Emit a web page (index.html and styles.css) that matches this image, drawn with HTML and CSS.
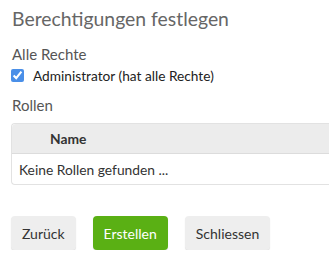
FILE: index.html
```html
<!DOCTYPE html>
<html lang="de">
<head>
  <meta charset="UTF-8">
  <title>Berechtigungen festlegen</title>
  <link rel="stylesheet" href="styles.css">
</head>
<body>
  <div class="dialog">
    <h2 class="dialog-title">Berechtigungen festlegen</h2>

    <div class="group-label">Alle Rechte</div>
    <label class="check-row">
      <input type="checkbox" checked>
      <span>Administrator (hat alle Rechte)</span>
    </label>

    <div class="group-label">Rollen</div>
    <table class="roles">
      <thead>
        <tr><th>Name</th></tr>
      </thead>
      <tbody>
        <tr><td>Keine Rollen gefunden ...</td></tr>
      </tbody>
    </table>

    <div class="actions">
      <button class="btn">Zurück</button>
      <button class="btn btn-primary">Erstellen</button>
      <button class="btn">Schliessen</button>
    </div>
  </div>
</body>
</html>
```

FILE: styles.css
```css
body {
  margin: 0;
  background: #fff;
  font-family: Lato, "Open Sans", sans-serif;
  color: #333;
  overflow: hidden;
}
.dialog {
  padding: 5px 0 0 11px;
}
.dialog-title {
  margin: 0 0 11px 1px;
  font-size: 19.4px;
  font-weight: normal;
  line-height: 28px;
  color: #666;
}
.group-label {
  margin-left: 1px;
  font-size: 15px;
  line-height: 20px;
  color: #555;
}
.check-row {
  display: flex;
  align-items: center;
  gap: 9px;
  height: 22px;
  margin-bottom: 9px;
  font-size: 13.7px;
  color: #222;
}
.check-row input {
  width: 13px;
  height: 13px;
  margin: 0;
  accent-color: #4a8fe8;
}
.roles {
  width: 330px;
  margin-top: 8px;
  border-collapse: separate;
  border-spacing: 0;
  border: 1px solid #e2e2e2;
  border-right: none;
  border-radius: 4px 0 0 4px;
  font-size: 13.8px;
}
.roles th {
  height: 29px;
  padding: 0 0 0 38px;
  text-align: left;
  background: #ececec;
  border-bottom: 1px solid #dcdcdc;
  border-radius: 4px 0 0 0;
}
.roles td {
  height: 30px;
  padding: 0 0 0 7px;
}
.actions {
  display: flex;
  gap: 17px;
  margin-top: 31px;
}
.btn {
  height: 34px;
  padding: 0 11px;
  border: none;
  border-radius: 4px;
  background: #eeeeee;
  box-shadow: 0 1px 1px rgba(0,0,0,0.12);
  font-family: inherit;
  font-size: 14px;
  color: #333;
}
.btn-primary {
  background: #5ab014;
  color: #fff;
}
```
